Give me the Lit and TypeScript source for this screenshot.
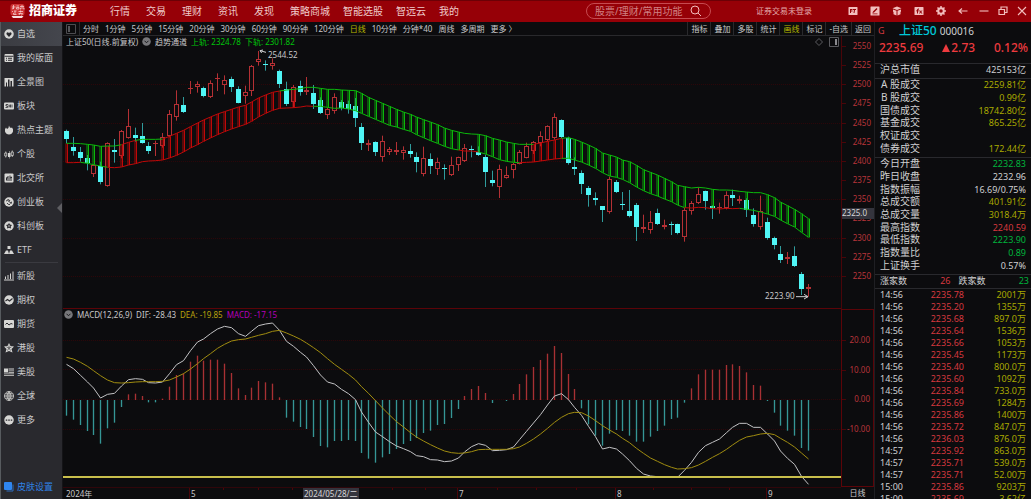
import { LitElement, html, svg, css, nothing } from "lit";
import { customElement, state } from "lit/decorators.js";
import { classMap } from "lit/directives/class-map.js";

const base = css`
  * {
    box-sizing: border-box;
  }
  button {
    margin: 0;
    padding: 0;
    border: 0;
    background: none;
    color: inherit;
    font: inherit;
    white-space: nowrap;
    cursor: pointer;
  }
  svg {
    display: block;
  }
`;

/* ---------- top bar ---------- */

const toolIcons: [string, unknown][] = [
  ["期货期权", svg`<path class="fill" fill-rule="evenodd" d="M2 2h16q1 0 1 1v14q0 1-1 1H2q-1 0-1-1V3q0-1 1-1zM4 6v8h2v-3h3V9H6V8h3V6zM10 6v2h2l-1 6h2l1-6h2V6z"/>`],
  ["画线", svg`<path class="fill" fill-rule="evenodd" d="M2 1h16q1 0 1 1v16q0 1-1 1H2q-1 0-1-1V2q0-1 1-1zM13 4l-7 7-1 3 3-1 7-7zM5 15v1.500h10V15z"/>`],
  ["工具箱", svg`<path class="fill" d="M10 1l9 3.500-9 3.500-9-3.500zM2 7l7 2.500V19l-6-2.500V12l-1-1zM18 7l-7 2.500V19l6-2.500V12l1-1z"/>`],
  ["公式", svg`<path class="fill" fill-rule="evenodd" d="M2 2h16q1 0 1 1v14q0 1-1 1H2q-1 0-1-1V3q0-1 1-1zM9 5Q6 5 6 8v1H4v1.500h2V15h2v-4.500h2V9H8V8q0-1 2-1V5zM10 9l2 3-2 3h2l1-2 1.500 2H17l-2.500-3L17 9h-2l-1 2-1.500-2z"/>`],
  ["设置", svg`<circle class="line" stroke-width="4" cx="10" cy="10" r="5.500"/><path class="line" stroke-width="3" d="M10 0v4M10 16v4M0 10h4M16 10h4M3 3l3 3M14 14l3 3M17 3l-3 3M6 14l-3 3"/>`],
  ["后退", svg`<path class="line" stroke-width="2.200" d="M19 10H3M8 5l-6 5 6 5"/>`],
];

const windowIcons: [string, unknown][] = [
  ["最小化", svg`<path class="line" stroke-width="2.200" d="M1 10h18"/>`],
  ["还原", svg`<path class="line" stroke-width="2.400" d="M6 6V2h12v11h-4M2 7h11v10H2z"/>`],
  ["关闭", svg`<path class="line" stroke-width="2.200" d="M2 2l16 16M18 2L2 18"/>`],
];

@customElement("top-bar")
class TopBar extends LitElement {
  static styles = [
    base,
    css`
      :host {
        display: flex;
        align-items: center;
        box-sizing: border-box;
        height: 22px;
        padding-bottom: 1px;
        border-top: 1px solid #6c0006;
        background: #960007;
        color: #eecaca;
        font-size: 10px;
        line-height: 18px;
      }
      .brand {
        display: flex;
        align-items: center;
        gap: 4px;
        width: 110px;
        padding-left: 10px;
        color: #fff;
        font-size: 12px;
        font-weight: 900;
      }
      .menu {
        display: flex;
      }
      .short {
        margin-right: 16px;
      }
      .long {
        margin-right: 13px;
      }
      .search {
        display: flex;
        align-items: center;
        width: 125px;
        height: 16px;
        margin-left: auto;
        padding: 0 8px;
        border: 1px solid #c64a50;
        border-radius: 8px;
      }
      .search input {
        flex: 1;
        min-width: 0;
        padding: 0;
        border: 0;
        outline: 0;
        background: none;
        color: #fff;
        font: inherit;
        line-height: 14px;
      }
      .search input::placeholder {
        color: #d08084;
        opacity: 1;
      }
      .login {
        margin: 0 30px 0 45px;
        color: #e3aaaa;
        font-size: 8px;
      }
      .tool,
      .win {
        display: flex;
        justify-content: center;
        width: 22px;
      }
      .win {
        width: 19px;
      }
      .fill {
        fill: #f2bdbd;
      }
      .line {
        fill: none;
        stroke: #f2bdbd;
      }
    `,
  ];
  render() {
    const menu = ["行情", "交易", "理财", "资讯", "发现", "策略商城", "智能选股", "智远云", "我的"];
    return html`
      <div class="brand">
        <svg width="15" height="15" viewBox="0 0 30 30" aria-hidden="true">
          <rect x="1" y="0" width="28" height="23" rx="5" fill="#cf3436" />
          <path d="M4 6h7M7 2v8M4 10l4-2M13 4h5M13 7h5v3h-5zM20 5h8M24 2v3M21 8h7v3M21 8v3M4 14l2 2M8 14h5M10 14v7M7 18v3h6M17 15h9M21 13v4M17 19h8l-2 4M20 18l-2 4" fill="none" stroke="#f6d5d5" stroke-width="1.500" />
          <path d="M3 24h24l-3 4H6z" fill="#f4dede" />
        </svg>
        <span>招商证券</span>
      </div>
      <nav class="menu">
        ${menu.map((m, i) => html`<button class=${i < 5 ? "short" : "long"}>${m}</button>`)}
      </nav>
      <label class="search">
        <input type="text" aria-label="搜索" placeholder="股票/理财/常用功能" />
        <svg width="12" height="12" viewBox="0 0 24 24" aria-hidden="true">
          <circle class="line" stroke-width="2" cx="10" cy="10" r="8" />
          <path class="line" stroke-width="2" d="M16 16l6 6" />
        </svg>
      </label>
      <button class="login">证券交易未登录</button>
      ${toolIcons.map(
        ([name, shape]) => html`<button class="tool" aria-label=${name}><svg width="10" height="10" viewBox="0 0 20 20">${shape}</svg></button>`
      )}
      ${windowIcons.map(
        ([name, shape]) => html`<button class="win" aria-label=${name}><svg width="10" height="10" viewBox="0 0 20 20">${shape}</svg></button>`
      )}
    `;
  }
}

/* ---------- side navigation ---------- */

const sideItems: [string, unknown][] = [
  ["自选", svg`<circle class="f" cx="10" cy="10" r="9.500"/><path class="k" d="M10 16l-5-5.500Q4 7 7 6.500q2 0 3 2 1-2 3-2 3 .5 2 4z"/>`],
  ["我的版面", svg`<rect class="f" x="1" y="2" width="18" height="16" rx="2"/><path class="n" stroke-width="2" d="M1 6.500h18M4 10.500h2M8 10.500h8M4 14.500h2M8 14.500h8"/>`],
  ["全景图", svg`<path class="f" d="M1 2h18v17h-3V8h-3v11h-2V5H8v14H6v-8H4v8H1z"/>`],
  ["板块", svg`<rect class="f" x="0" y="3" width="20" height="14" rx="2"/><path class="n" stroke-width="1.600" d="M8 7H4v3h3v3H3M10 7v6M10 10h3M13 7v6M16 7v6"/>`],
  ["热点主题", svg`<path class="f" d="M10 1q1 4 4 5l2-1q3 3 2 8-2 6-8 6t-8-6q-1-5 2-8l2 3q4-2 4-7z"/>`],
  ["个股", svg`<path class="s" stroke-width="1.800" d="M3.500 5v3M3.500 14v3M1.500 8h4v6h-4zM16.500 3v3M16.500 13v3M14.500 6h4v7h-4z"/><path class="f" d="M8 8h5v8H8zM10 4h1v15h-1z"/>`],
  ["北交所", svg`<rect class="f" x="1" y="1" width="18" height="18" rx="2"/><path class="n" stroke-width="2" d="M5 9v6M8 6v10M12 5v11M15 8v3M15 13v2M4 11l4-2M12 10l4-2"/>`],
  ["创业板", svg`<circle class="f" cx="10" cy="10" r="9.500"/><path class="n" stroke-width="1.800" d="M4 8q3-3 6 1t6 1M7 5q4 0 5 3M6 12q2 4 6 3M12 12h4"/>`],
  ["科创板", svg`<circle class="f" cx="10" cy="10" r="9.500"/><path class="k" d="M10 4l2 3 4 1-2.500 3 .5 4-4-1.500L6 15l.5-4L4 8l4-1z"/><circle class="f" cx="10" cy="10" r="1.500"/>`],
  ["ETF", svg`<path class="f" d="M7 2h6v6H7zM4 11h4l2 7H0zM12 11h4l4 7H10z"/>`],
  ["新股", svg`<path class="f" d="M0 17h20v2H0zM2 11h2v5H2zM7 8h2v8H7zM12 5h2v11h-2zM17 1h2v15h-2z"/>`],
  ["期权", svg`<circle class="f" cx="10" cy="10" r="9.500"/><path class="n" stroke-width="2.200" d="M3 12l4-3 4 3 6-5"/>`],
  ["期货", svg`<rect class="f" x="0" y="2" width="20" height="16" rx="2"/><path class="n" stroke-width="2" d="M3 11l3-3 4 4 4-3 3 1"/>`],
  ["港股", svg`<path class="f" d="M10 0l3 6 7 1-5 5 2 7-7-3-7 3 2-7-5-5 7-1z"/><path class="n" stroke-width="1.200" d="M10 10V5M10 10l5-2M10 10l3 5M10 10l-3 5M10 10L5 8"/>`],
  ["美股", svg`<path class="f" d="M0 3h8v8H0zM9 3h11v2H9zM9 7h11v1.500H9zM9 10h11v1.500H9zM0 13h20v1.500H0zM0 16h20v1.500H0z"/>`],
  ["全球", svg`<path class="s" stroke-width="1.900" d="M10 1a9 9 0 1 0 .1 0zM10 1v18M1 10h18M10 1q-8 9 0 18M10 1q8 9 0 18M3 5.500h14M3 14.500h14"/>`],
  ["更多", svg`<circle class="f" cx="10" cy="10" r="9.500"/><path class="k" d="M3.500 9h3v2.500h-3zM8.500 9h3v2.500h-3zM13.500 9h3v2.500h-3z"/>`],
];

@customElement("side-nav")
class SideNav extends LitElement {
  @state() private active = "自选";

  static styles = [
    base,
    css`
      :host {
        position: relative;
        display: flex;
        flex-direction: column;
        overflow: hidden;
        border-left: 1px solid #575b5f;
        border-right: 1px solid #141417;
        background: #29292e;
        color: #c9c9cb;
        font-size: 9px;
        line-height: 12px;
      }
      .item {
        display: flex;
        flex: none;
        align-items: center;
        gap: 3px;
        height: 24px;
        padding-left: 3px;
      }
      .active {
        background: linear-gradient(90deg, #3b3c42, #44464d);
      }
      .rule {
        flex: none;
        height: 1px;
        margin: 0 4px 1px;
        background: #3a3a40;
      }
      .skin {
        margin-top: auto;
        color: #2f82e6;
      }
      .f {
        fill: #d6d6d4;
      }
      .k {
        fill: #29292e;
      }
      .n {
        fill: none;
        stroke: #29292e;
      }
      .s {
        fill: none;
        stroke: #c4c4c2;
      }
      .fold {
        position: absolute;
        top: 38%;
        right: 0;
        width: 5px;
        height: 10px;
      }
    `,
  ];
  render() {
    return html`
      ${sideItems.map(
        ([name, shape], i) => html`
          ${i === 10 ? html`<div class="rule"></div>` : nothing}
          <button class=${classMap({ item: true, active: this.active === name })} @click=${() => (this.active = name)}>
            <svg width="10" height="10" viewBox="0 0 20 20" aria-hidden="true">${shape}</svg>${name}
          </button>
        `
      )}
      <button class="item skin">
        <svg width="10" height="10" viewBox="0 0 20 20" aria-hidden="true">
          <rect x="0" y="0" width="16" height="16" rx="2" fill="#2f86f0" />
          <path d="M18 5v13H5" fill="none" stroke="#2f6fc0" stroke-width="2" />
        </svg>皮肤设置
      </button>
      <button class="fold" aria-label="收起">
        <svg width="5" height="10" viewBox="0 0 5 10"><path d="M5 0v10L0 5z" fill="#5e5e62" /></svg>
      </button>
    `;
  }
}

/* ---------- chart data: drawing units are thirds of a pixel ---------- */

type Bar = [number, number, number, number, number];
const lift = (by: number, rows: Bar[]): Bar[] => rows.map(([h, t, b, l, up]) => [h + by, t + by, b + by, l + by, up]);
const raise = (by: number, values: number[]) => values.map((v) => v + by);

// high, body top, body bottom, low, rising
const bars: Bar[] = [
  ...lift(135, [
    [254, 258, 281, 295, 0], [276, 306, 317, 332, 0], [306, 321, 339, 350, 0], [330, 340, 356, 376, 0],
    [358, 360, 388, 396, 1], [350, 362, 409, 418, 0], [292, 294, 423, 425, 1], [282, 314, 320, 353, 0],
    [255, 258, 332, 340, 1], [192, 244, 279, 281, 1], [248, 270, 279, 290, 0], [234, 272, 293, 296, 0],
    [291, 303, 318, 327, 0], [287, 294, 297, 333, 1], [264, 276, 304, 308, 1], [195, 208, 274, 277, 1],
    [136, 178, 217, 227, 1], [156, 180, 202, 204, 0], [108, 129, 130, 147, 1], [109, 118, 127, 143, 1],
    [125, 129, 154, 157, 0], [106, 115, 157, 159, 1], [85, 99, 101, 138, 1], [91, 104, 119, 148, 1],
    [95, 102, 126, 141, 0], [124, 131, 172, 175, 0], [122, 142, 155, 176, 1], [60, 62, 136, 153, 1],
    [18, 43, 52, 62, 1], [46, 57, 60, 77, 0], [40, 53, 62, 74, 1], [74, 77, 117, 129, 0],
    [110, 132, 178, 183, 0], [120, 126, 170, 188, 1], [107, 123, 141, 152, 0], [96, 136, 142, 150, 1],
  ]),
  ...lift(210, [
    [45, 70, 104, 117, 0], [82, 91, 130, 132, 0], [112, 116, 133, 147, 1], [70, 82, 123, 131, 1],
    [90, 96, 115, 121, 0], [92, 103, 118, 131, 0], [84, 107, 142, 171, 0], [159, 171, 218, 240, 0],
    [209, 219, 226, 243, 1], [214, 215, 244, 258, 0], [197, 213, 262, 275, 1], [231, 238, 246, 255, 1],
    [216, 239, 244, 255, 1], [229, 240, 250, 269, 1], [222, 244, 254, 263, 0], [247, 260, 275, 307, 0],
    [230, 264, 313, 319, 1], [250, 266, 287, 312, 0], [263, 277, 299, 315, 1], [283, 294, 298, 329, 0],
    [260, 286, 316, 318, 1], [260, 262, 286, 303, 1], [222, 235, 274, 276, 1], [227, 236, 240, 262, 0],
    [229, 245, 255, 258, 0], [254, 261, 305, 351, 0], [302, 330, 340, 349, 0], [284, 297, 352, 384, 1],
    [289, 315, 324, 326, 1], [279, 282, 301, 325, 1], [240, 245, 280, 283, 1], [218, 227, 262, 265, 1],
    [213, 217, 245, 252, 1], [184, 198, 220, 229, 1], [166, 169, 211, 215, 1], [130, 142, 206, 209, 1],
    [148, 150, 201, 204, 0], [200, 205, 281, 284, 0], [262, 290, 296, 315, 0],
  ]),
  ...lift(390, [
    [121, 129, 163, 192, 0], [168, 174, 195, 230, 0], [187, 205, 212, 226, 0], [228, 229, 242, 276, 0],
    [140, 148, 248, 251, 1], [150, 156, 186, 189, 0], [186, 222, 224, 240, 0], [180, 243, 259, 262, 0],
    [219, 226, 293, 333, 0], [254, 291, 298, 309, 1], [243, 276, 300, 311, 1], [236, 249, 282, 285, 0],
    [269, 285, 290, 298, 1], [275, 281, 283, 315, 0], [281, 283, 311, 313, 0], [234, 241, 323, 335, 1],
    [213, 220, 244, 254, 1], [172, 192, 218, 222, 1], [182, 184, 215, 239, 0], [226, 229, 234, 267, 0],
    [218, 232, 234, 251, 1], [184, 196, 235, 238, 1], [179, 194, 204, 228, 0], [197, 208, 213, 221, 1],
    [205, 210, 239, 261, 0], [235, 256, 282, 290, 0], [197, 244, 293, 299, 1], [263, 275, 324, 329, 0],
    [320, 324, 345, 358, 0], [348, 371, 388, 399, 0], [366, 382, 387, 402, 1], [349, 378, 408, 411, 0],
    [426, 433, 478, 495, 0], [462, 472, 479, 500, 1],
  ]),
];

const upper = [
  ...raise(135, [295, 295, 296, 298, 300, 304, 303, 303, 299, 292, 286, 283, 283, 283, 282, 274, 265, 256, 245, 234, 225, 216, 207, 200, 193, 186, 181, 171, 159, 150, 142, 138, 135, 133, 131, 127]),
  ...raise(210, [52, 55, 58, 58, 60, 61, 62, 70, 82, 91, 100, 109, 118, 126, 133, 141, 149, 156, 164, 174, 181, 186, 190, 192, 193, 197, 205, 210, 216, 220, 223, 223, 223, 219, 214, 210, 205, 203, 208]),
  ...raise(390, [36, 45, 55, 69, 75, 81, 90, 95, 106, 119, 127, 135, 145, 155, 166, 170, 174, 172, 174, 178, 180, 180, 181, 184, 186, 188, 188, 194, 203, 216, 227, 238, 251, 266]),
];
const lower = [
  ...raise(135, [353, 353, 352, 355, 359, 363, 367, 368, 366, 360, 356, 350, 348, 347, 345, 339, 331, 321, 309, 299, 289, 279, 269, 260, 252, 245, 238, 229, 216, 205, 196, 190, 189, 188, 186, 183]),
  ...raise(210, [109, 109, 112, 115, 114, 117, 122, 130, 139, 148, 157, 166, 171, 178, 184, 194, 203, 212, 220, 229, 236, 240, 243, 243, 246, 252, 260, 269, 274, 277, 278, 277, 276, 273, 270, 267, 265, 265, 270]),
  ...raise(390, [96, 105, 115, 128, 138, 142, 148, 158, 171, 182, 191, 198, 207, 215, 225, 233, 234, 232, 233, 236, 237, 235, 236, 235, 238, 241, 246, 252, 259, 270, 281, 291, 307, 322]),
];

type Run = [number, number, "r" | "g"];
const upperRuns: Run[] = [[0, 8, "g"], [8, 10, "r"], [10, 14, "g"], [14, 31, "r"], [31, 68, "g"], [68, 72, "r"], [72, 108, "g"]];
const lowerRuns: Run[] = [[0, 2, "r"], [2, 6, "g"], [6, 36, "r"], [36, 57, "g"], [57, 60, "r"], [60, 66, "g"], [66, 72, "r"], [72, 90, "g"], [90, 98, "r"], [98, 108, "g"]];
const hatchRuns: Run[] = [[0, 0, "r"], [3, 5, "g"], [6, 6, "r"], [8, 10, "r"], [14, 31, "r"], [33, 33, "r"], [37, 38, "g"], [40, 57, "g"], [60, 65, "g"], [68, 72, "r"], [73, 90, "g"], [94, 94, "g"], [99, 99, "g"], [102, 108, "g"]];

const hist = [
  332, 344, 360, 378, 390, 416, 370, 353, 306, 268, 266, 273, 292, 292, 281, 245, 210, 205, 170, 152, 167, 164, 164, 176, 204, 250, 270, 248, 228, 232, 236, 277, 338, 350, 366, 372, 396,
  423, 427, 408, 408, 405, 408, 444, 461, 473, 457, 447, 432, 417, 408, 399, 384, 377, 360, 357, 339, 312, 273, 252, 243, 264, 294, 285, 288, 267, 237, 208, 186, 165, 146, 123, 144, 207, 252, 310, 358,
  392, 422, 386, 375, 378, 392, 410, 410, 395, 378, 362, 342, 338, 293, 250, 208, 194, 194, 194, 180, 178, 183, 202, 240, 242, 288, 323, 362, 377, 392, 429, 437,
];
const dif = [
  178, 191, 211, 231, 249, 279, 268, 265, 243, 224, 221, 223, 233, 234, 231, 206, 179, 167, 137, 111, 102, 86, 72, 64, 68, 86, 94, 79, 62, 57, 54, 76, 109, 124, 142, 156, 182,
  210, 231, 237, 253, 266, 284, 321, 352, 381, 395, 410, 423, 431, 440, 452, 455, 464, 465, 470, 468, 459, 441, 425, 416, 421, 437, 436, 434, 426, 404, 379, 354, 329, 300, 273, 266, 284, 307, 331, 364,
  395, 432, 427, 432, 447, 467, 490, 507, 513, 515, 516, 516, 517, 496, 472, 442, 422, 412, 402, 383, 367, 355, 355, 367, 367, 387, 408, 438, 460, 478, 514, 538,
];
const dea = [
  157, 162, 172, 184, 197, 212, 225, 233, 234, 233, 231, 230, 230, 230, 229, 225, 216, 206, 192, 176, 161, 146, 130, 118, 108, 104, 102, 97, 91, 86, 79, 76, 84, 93, 103, 114, 128,
  143, 161, 178, 193, 208, 225, 245, 265, 287, 309, 330, 350, 366, 383, 396, 408, 419, 429, 438, 443, 445, 444, 440, 434, 433, 433, 433, 433, 431, 426, 415, 402, 387, 370, 352, 337, 326, 322, 323, 333,
  347, 362, 375, 387, 400, 413, 430, 445, 459, 469, 479, 487, 492, 491, 488, 480, 469, 457, 446, 433, 420, 406, 396, 392, 387, 385, 389, 400, 412, 426, 444, 462,
];

const LEFT = 189;
const WIDTH = 2334;
const barX = (i: number) => Math.floor((199.5 + i * 20.61) / 3) * 3 + 1.5;
const points = (values: number[], from = 0, to = values.length - 1) =>
  values.slice(from, to + 1).map((v, k) => `${barX(from + k)},${v}`).join(" ");
const across = (x: number) => `left:${((x * 3 - LEFT) / WIDTH) * 100}%`;

const chevron = html`<svg class="drop" width="9" height="9" viewBox="0 0 18 18" aria-hidden="true">
  <circle cx="9" cy="9" r="8.500" fill="#77777a" />
  <path d="M5 7.500l4 4 4-4" fill="none" stroke="#17171a" stroke-width="2" />
</svg>`;

@customElement("kline-chart")
class KlineChart extends LitElement {
  @state() private period = "日线";

  static styles = [
    base,
    css`
      :host {
        display: flex;
        flex-direction: column;
        min-width: 0;
        background: #0c0c0e;
        color: #c8c8ca;
        font-size: 8px;
        line-height: 10px;
      }
      .bar {
        display: flex;
        flex: none;
        align-items: stretch;
        height: 14px;
        border-bottom: 1px solid #29292c;
        line-height: 13px;
      }
      .bar .dock {
        display: flex;
        align-items: center;
        width: 17px;
        padding-left: 3px;
        border-right: 1px solid #29292c;
      }
      .periods {
        display: flex;
        flex: 1;
        gap: 6px;
        padding-left: 3px;
      }
      .bar .cell {
        padding: 0 3px;
        border-left: 1px solid #29292c;
      }
      .on {
        color: #b4b400;
      }
      .plot {
        display: grid;
        flex: 1;
        grid-template-columns: minmax(0, 1fr) 33px;
        grid-template-rows: minmax(0, 273fr) minmax(0, 178fr) 12px;
        min-height: 0;
      }
      .pane {
        position: relative;
        overflow: hidden;
      }
      .pane > .canvas {
        width: 100%;
        height: 100%;
      }
      .legend {
        position: absolute;
        top: 0;
        left: 0;
        display: flex;
        align-items: center;
        gap: 4px;
        height: 11px;
        padding-left: 3px;
        white-space: nowrap;
      }
      .lower {
        padding-left: 1px;
      }
      .corner {
        position: absolute;
        top: 1px;
        right: 2px;
        display: flex;
        gap: 6px;
      }
      .note {
        position: absolute;
        white-space: nowrap;
      }
      .green {
        color: #00c40a;
      }
      .yellow {
        color: #b9a20c;
      }
      .purple {
        color: #b400b8;
      }
      .axis {
        position: relative;
        display: flex;
        flex-direction: column;
        justify-content: space-between;
        border-left: 1px solid #4a0509;
        padding: 5px 3px 28px 0;
        color: #b8343a;
        text-align: right;
      }
      .axis span::before {
        content: "";
        float: left;
        width: 4px;
        height: 1px;
        margin-top: 5px;
        background: #4a0509;
      }
      .second {
        padding: 25px 3px 52px 0;
        border: 1px solid #5c0408;
      }
      .flag {
        position: absolute;
        top: 63%;
        left: 0;
        width: 100%;
        height: 11px;
        background: #34343d;
        color: #d6d6d8;
        text-align: left;
      }
      .dates {
        position: relative;
        border-top: 1px solid #30060a;
        line-height: 11px;
      }
      .date {
        position: absolute;
        top: 0;
        padding-left: 1px;
        white-space: nowrap;
      }
      .month {
        border-left: 1px solid #4a0509;
      }
      .mark {
        padding: 0 1px;
        background: #34343d;
        color: #d6d6d8;
      }
      .tick {
        position: absolute;
        top: 0;
        width: 1px;
        height: 2px;
        background: #4a0509;
      }
      .unit {
        line-height: 12px;
        text-align: center;
      }
      .grid {
        stroke: #2c0609;
        stroke-width: 3;
        stroke-dasharray: 3 3;
      }
      .edge {
        stroke: #5c0408;
        stroke-width: 3;
      }
      .rise {
        fill: none;
        stroke: #b43034;
        stroke-width: 3;
      }
      .fall {
        fill: #50f6f6;
      }
      .wick {
        stroke: #b43034;
        stroke-width: 3;
      }
      .wick.down {
        stroke: #2f9c9c;
      }
      .line {
        fill: none;
        stroke-width: 3;
      }
      .r {
        stroke: #c00808;
      }
      .g {
        stroke: #0bb80b;
      }
      .shade {
        stroke-width: 9;
        opacity: 0.42;
      }
      .up {
        stroke: #a83034;
        stroke-width: 4;
      }
      .dn {
        stroke: #359696;
        stroke-width: 4;
      }
    `,
  ];

  private hatch() {
    return hatchRuns.flatMap(([from, to, tone]) =>
      Array.from({ length: to - from + 1 }, (_, k) => {
        const i = from + k;
        const x = barX(i);
        return svg`
          <line class="shade ${tone}" x1=${x} x2=${x} y1=${upper[i]} y2=${lower[i]} />
          <line class="line ${tone}" x1=${x + 3} x2=${x + 3} y1=${upper[i]} y2=${lower[i]} />`;
      })
    );
  }

  private candle([high, top, bottom, low, up]: Bar, i: number) {
    const x = barX(i);
    const t = Math.round(top / 3) * 3;
    const h = Math.max(3, Math.round((bottom - top) / 3) * 3);
    if (!up) {
      return svg`<line class="wick down" x1=${x} x2=${x} y1=${high} y2=${low} />
        <rect class="fall" x=${x - 7.5} y=${t} width="15" height=${h} />`;
    }
    // a one-pixel body has no inside, so it is drawn as a dash
    const body =
      h <= 3
        ? svg`<line class="wick" x1=${x - 7.5} x2=${x + 7.5} y1=${t + 1.5} y2=${t + 1.5} />`
        : svg`<rect class="rise" x=${x - 6} y=${t + 1.5} width="12" height=${h - 3} />`;
    return svg`<line class="wick" x1=${x} x2=${x} y1=${high} y2=${t} />
      <line class="wick" x1=${x} x2=${x} y1=${t + h} y2=${low} />${body}`;
  }

  private band(values: number[], runs: Run[]) {
    return runs.map(([a, b, tone]) => svg`<polyline class="line ${tone}" points=${points(values, a, b)} />`);
  }

  render() {
    const periods = ["分时", "1分钟", "5分钟", "15分钟", "20分钟", "30分钟", "60分钟", "90分钟", "120分钟", "日线", "10分钟", "分钟*40", "周线", "多周期", "更多 〉"];
    const tools = ["指标", "叠加", "多股", "统计", "画线", "标记", "-自选", "返回"];
    const prices = Array.from({ length: 13 }, (_, i) => 2550 - i * 25);
    const right = LEFT + WIDTH;
    return html`
      <div class="bar">
        <button class="dock" aria-label="侧栏">
          <svg width="10" height="10" viewBox="0 0 10 10">
            <path d="M.5.500h9v9h-9z" fill="none" stroke="#4c4c50" />
            <path d="M3 2v6" stroke="#a0a0a4" />
          </svg>
        </button>
        <div class="periods">
          ${periods.map(
            (p) => html`<button class=${classMap({ on: p === this.period })} @click=${() => (this.period = p)}>${p}</button>`
          )}
        </div>
        ${tools.map((t) => html`<button class=${classMap({ cell: true, on: t === "画线" })}>${t}</button>`)}
      </div>
      <div class="plot">
        <div class="pane">
          <svg class="canvas" viewBox="189 108 2334 819" preserveAspectRatio="none" role="img" aria-label="上证50日线">
            ${[253.5, 370.5, 484.5, 598.5, 715.5, 829.5].map((y) => svg`<line class="grid" x1=${LEFT} x2=${right} y1=${y} y2=${y} />`)}
            ${bars.map((b, i) => this.candle(b, i))}
            ${this.hatch()}
            ${this.band(upper, upperRuns)} ${this.band(lower, lowerRuns)}
            <path d="M798 157L780 152M780 152l9-2M780 152l5 7" fill="none" stroke="#d0d0d2" stroke-width="3" />
            <path d="M2388 890h36M2412 883l12 7-12 7" fill="none" stroke="#d0d0d2" stroke-width="3" />
            <line class="edge" x1=${LEFT} x2=${right} y1="925.500" y2="925.500" />
          </svg>
          <div class="legend">
            <span>上证50(日线.前复权)</span>${chevron}<span>趋势通道</span>
            <span class="green">上轨: 2324.78</span><span class="green">下轨: 2301.82</span>
          </div>
          <div class="corner">
            <svg width="8" height="10" viewBox="0 0 8 10"><path d="M4 1.500L7.500 5 4 8.500.500 5z" fill="none" stroke="#5a5a5e" /></svg>
            <svg width="10" height="10" viewBox="0 0 10 10">
              <path d="M.5.500h9v9h-9z" fill="none" stroke="#5a5a5e" /><path d="M7 2v6" stroke="#8a8a8e" stroke-width="2" />
            </svg>
          </div>
          <span class="note" style="${across(268)};top:5%">2544.52</span>
          <span class="note" style="${across(765)};top:93.500%">2223.90</span>
        </div>
        <div class="axis">
          ${prices.map((p) => html`<span>${p}</span>`)}
          <div class="flag">2325.0</div>
        </div>
        <div class="pane">
          <svg class="canvas" viewBox="189 927 2334 534" preserveAspectRatio="none" role="img" aria-label="MACD">
            ${[1021.5, 1108.5, 1198.5, 1288.5].map((y) => svg`<line class="grid" x1=${LEFT} x2=${right} y1=${y} y2=${y} />`)}
            ${hist.map((v, i) => svg`<line class=${v < 285 ? "up" : "dn"} x1=${barX(i)} x2=${barX(i)} y1="1200" y2=${v + 915} />`)}
            <polyline class="line" stroke="#c2c2c4" points=${points(raise(915, dif))} />
            <polyline class="line" stroke="#a08c10" points=${points(raise(915, dea))} />
            <line x1=${LEFT} x2=${right} y1="1431" y2="1431" stroke="#c9bf4c" stroke-width="6" />
          </svg>
          <div class="legend lower">
            ${chevron}<span>MACD(12,26,9)</span><span>DIF: -28.43</span><span class="yellow">DEA: -19.85</span>
            <span class="purple">MACD: -17.15</span>
          </div>
        </div>
        <div class="axis second">
          ${["20.00", "10.00", "0.00", "-10.00"].map((v) => html`<span>${v}</span>`)}
        </div>
        <div class="dates">
          ${[223, 258, 292, 392, 425, 497, 536, 576, 653, 691, 729].map((x) => html`<i class="tick" style=${across(x)}></i>`)}
          <span class="date" style=${across(65)}>2024年</span>
          ${([[189, "5"], [457, "7"], [615, "8"], [766, "9"]] as [number, string][]).map(
            ([x, m]) => html`<span class="date month" style=${across(x)}>${m}</span>`
          )}
          <span class="date mark" style=${across(303)}>2024/05/28/二</span>
        </div>
        <div class="unit">日线</div>
      </div>
    `;
  }
}

/* ---------- quote panel ---------- */

const turnover: [string, string, string][] = [
  ["A 股成交", "2259.81亿", "y"],
  ["B 股成交", "0.99亿", "y"],
  ["国债成交", "18742.80亿", "y"],
  ["基金成交", "865.25亿", "y"],
  ["权证成交", "", ""],
  ["债券成交", "172.44亿", "y"],
];
const session: [string, string, string][] = [
  ["今日开盘", "2232.83", "g"],
  ["昨日收盘", "2232.96", ""],
  ["指数振幅", "16.69/0.75%", ""],
  ["总成交额", "401.91亿", "y"],
  ["总成交量", "3018.4万", "y"],
  ["最高指数", "2240.59", "r"],
  ["最低指数", "2223.90", "g"],
  ["指数量比", "0.89", "g"],
  ["上证换手", "0.57%", ""],
];
const ticks: [string, string, string][] = [
  ["14:56", "2235.78", "2001万"],
  ["14:56", "2235.20", "1355万"],
  ["14:56", "2235.68", "897.0万"],
  ["14:56", "2235.64", "1536万"],
  ["14:56", "2235.66", "1053万"],
  ["14:56", "2235.45", "1173万"],
  ["14:56", "2235.40", "800.0万"],
  ["14:56", "2235.60", "1092万"],
  ["14:56", "2235.84", "733.0万"],
  ["14:56", "2235.69", "1284万"],
  ["14:56", "2235.86", "1400万"],
  ["14:56", "2235.72", "847.0万"],
  ["14:56", "2236.03", "876.0万"],
  ["14:57", "2235.92", "863.0万"],
  ["14:57", "2235.71", "539.0万"],
  ["14:57", "2235.71", "52.00万"],
  ["15:00", "2235.86", "9203万"],
  ["15:00", "2235.69", "3.62亿"],
];

@customElement("quote-panel")
class QuotePanel extends LitElement {
  static styles = [
    base,
    css`
      :host {
        display: block;
        overflow: hidden;
        border-left: 1px solid #1f1f23;
        background: #0c0c0e;
        color: #d0d0d2;
        font-size: 9px;
        line-height: 11px;
      }
      .name {
        display: flex;
        align-items: center;
        height: 17px;
        padding-left: 3px;
        line-height: 16px;
      }
      .flag {
        width: 21px;
      }
      .title {
        margin-right: 3px;
        color: #00c8d8;
        font-size: 12px;
        font-weight: 500;
      }
      .code {
        font-size: 10px;
      }
      .price {
        display: flex;
        justify-content: space-between;
        height: 24px;
        padding: 0 3px 0 4px;
        font-size: 12px;
        font-weight: 500;
        line-height: 18px;
      }
      .price .r {
        color: #ee3a3e;
      }
      .delta {
        display: flex;
        align-items: center;
        gap: 1px;
        height: 18px;
      }
      table {
        width: 100%;
        border-collapse: collapse;
        border-top: 1px solid #29292d;
      }
      th,
      td {
        padding: 0 0 1px;
        font-weight: 400;
        text-align: right;
        vertical-align: middle;
        white-space: nowrap;
      }
      th {
        width: 45px;
        font-size: 10px;
      }
      td:last-child {
        padding-right: 5px;
      }
      .cap {
        height: 13px;
        margin-bottom: 2px;
      }
      .turnover {
        height: 77px;
        margin-bottom: 2px;
      }
      .session {
        height: 115px;
        margin-bottom: 2px;
      }
      .breadth {
        display: flex;
        height: 15px;
        padding: 0 2px 0 5px;
        border-top: 1px solid #29292d;
        border-bottom: 1px solid #29292d;
        line-height: 11px;
      }
      .breadth span {
        flex: 1;
      }
      .breadth b {
        font-weight: 400;
      }
      .breadth b:first-of-type {
        margin-right: 8px;
      }
      .ticks {
        border-top: 0;
        line-height: 12px;
      }
      .ticks td {
        height: 12px;
        padding-bottom: 0;
      }
      .ticks td:first-child {
        width: 40px;
        padding-left: 5px;
        text-align: left;
      }
      .ticks td:nth-child(2) {
        width: 49px;
        color: #d6383e;
      }
      .ticks td:last-child {
        color: #a9a900;
      }
      .y {
        color: #a9a900;
      }
      .g {
        color: #00b43c;
      }
      .r {
        color: #d6383e;
      }
    `,
  ];
  private rows(list: [string, string, string][]) {
    return list.map(([k, v, tone]) => html`<tr><th scope="row">${k}</th><td class=${tone}>${v}</td></tr>`);
  }
  render() {
    return html`
      <div class="name"><span class="flag r">G</span><span class="title">上证50</span><span class="code">000016</span></div>
      <div class="price">
        <span class="r">2235.69</span>
        <span class="r delta"><svg width="8" height="8" viewBox="0 0 8 8" aria-hidden="true"><path d="M4 0l4 8H0z" fill="currentColor" /></svg>2.73</span>
        <span class="r">0.12%</span>
      </div>
      <table class="cap"><tbody>${this.rows([["沪总市值", "425153亿", ""]])}</tbody></table>
      <table class="turnover"><tbody>${this.rows(turnover)}</tbody></table>
      <table class="session"><tbody>${this.rows(session)}</tbody></table>
      <div class="breadth"><span>涨家数</span><b class="r">26</b><span>跌家数</span><b class="g">23</b></div>
      <table class="ticks">
        <tbody>${ticks.map(([t, p, v]) => html`<tr><td>${t}</td><td>${p}</td><td>${v}</td></tr>`)}</tbody>
      </table>
    `;
  }
}

@customElement("app-root")
class AppRoot extends LitElement {
  static styles = css`
    :host {
      display: grid;
      grid-template-columns: 63px minmax(0, 1fr) 157px;
      grid-template-rows: auto minmax(0, 1fr);
      height: 100vh;
      overflow: hidden;
      background: #0c0c0e;
      font-family: "Noto Sans", "Noto Sans CJK SC", sans-serif;
    }
    top-bar {
      grid-column: 1 / -1;
    }
  `;
  render() {
    return html`<top-bar></top-bar><side-nav></side-nav><kline-chart></kline-chart><quote-panel></quote-panel>`;
  }
}
